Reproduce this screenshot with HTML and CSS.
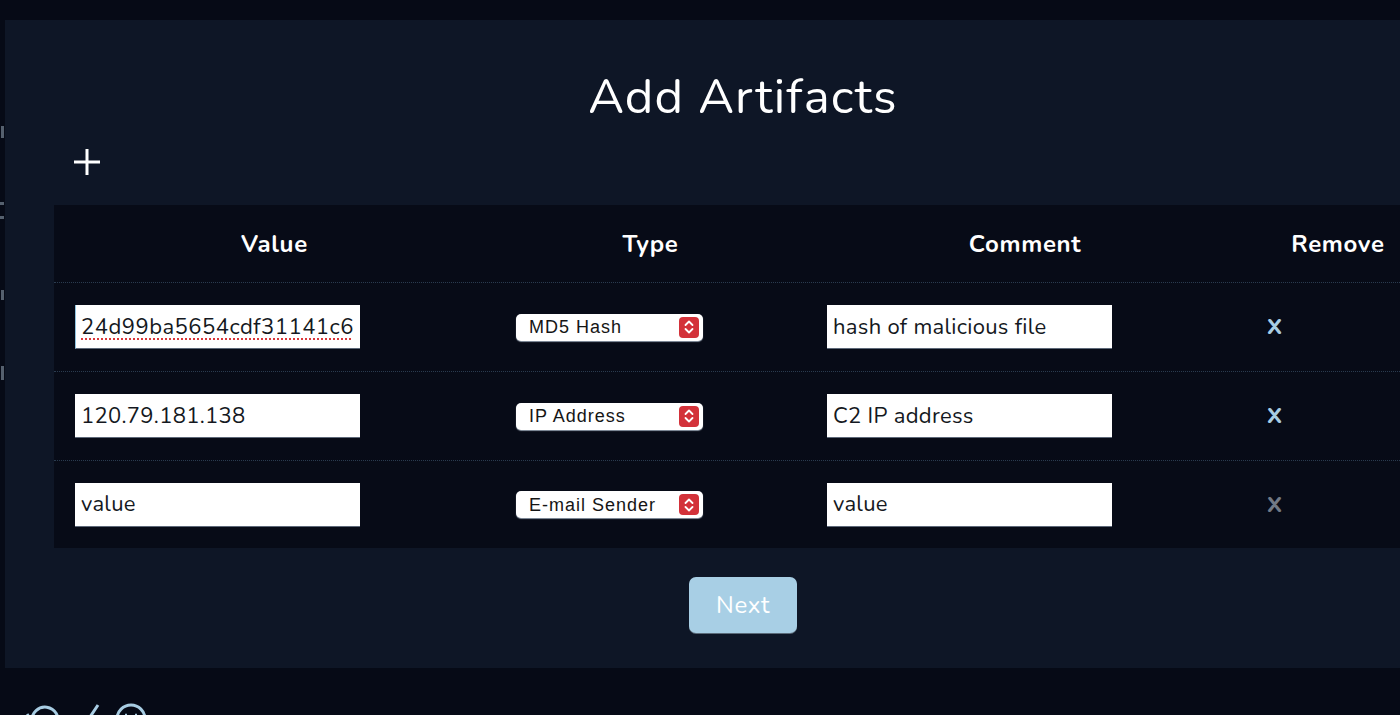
FILE: index.html
```html
<!DOCTYPE html>
<html lang="en">
<head>
<meta charset="utf-8">
<title>Add Artifacts</title>
<link rel="stylesheet" href="styles.css">
</head>
<body>
<div class="edge">
  <span class="mark m1"></span>
  <span class="mark m2"></span>
  <span class="mark m3"></span>
  <span class="mark m4"></span>
  <span class="mark m5"></span>
</div>
<main class="panel">
  <h1 class="title">Add Artifacts</h1>
  <div class="toolbar">
    <button class="add" aria-label="Add artifact">
      <svg width="28" height="28" viewBox="0 0 28 28"><path d="M14 1v26M1 14h26" stroke="#fff" stroke-width="3" fill="none"/></svg>
    </button>
  </div>
  <div class="table">
    <div class="row head">
      <div class="cell center">Value</div>
      <div class="cell center">Type</div>
      <div class="cell center">Comment</div>
      <div class="cell center">Remove</div>
    </div>
    <div class="row">
      <div class="cell"><input class="field spell" value="24d99ba5654cdf31141c6"></div>
      <div class="cell">
        <div class="select-wrap">
          <select class="select"><option>MD5 Hash</option></select>
          <span class="arrow"><svg width="12" height="16" viewBox="0 0 12 16"><path d="M2.5 6 6 2.5 9.5 6M2.5 10 6 13.5 9.5 10" stroke="#fff" stroke-width="1.8" fill="none" stroke-linecap="round" stroke-linejoin="round"/></svg></span>
        </div>
      </div>
      <div class="cell"><input class="field" value="hash of malicious file"></div>
      <div class="cell rm"><button class="remove">X</button></div>
    </div>
    <div class="row">
      <div class="cell"><input class="field" value="120.79.181.138"></div>
      <div class="cell">
        <div class="select-wrap">
          <select class="select"><option>IP Address</option></select>
          <span class="arrow"><svg width="12" height="16" viewBox="0 0 12 16"><path d="M2.5 6 6 2.5 9.5 6M2.5 10 6 13.5 9.5 10" stroke="#fff" stroke-width="1.8" fill="none" stroke-linecap="round" stroke-linejoin="round"/></svg></span>
        </div>
      </div>
      <div class="cell"><input class="field" value="C2 IP address"></div>
      <div class="cell rm"><button class="remove">X</button></div>
    </div>
    <div class="row last">
      <div class="cell"><input class="field" placeholder="value"></div>
      <div class="cell">
        <div class="select-wrap">
          <select class="select"><option>E-mail Sender</option></select>
          <span class="arrow"><svg width="12" height="16" viewBox="0 0 12 16"><path d="M2.5 6 6 2.5 9.5 6M2.5 10 6 13.5 9.5 10" stroke="#fff" stroke-width="1.8" fill="none" stroke-linecap="round" stroke-linejoin="round"/></svg></span>
        </div>
      </div>
      <div class="cell"><input class="field" placeholder="value"></div>
      <div class="cell rm"><button class="remove disabled" disabled>X</button></div>
    </div>
  </div>
  <div class="actions">
    <button class="next">Next</button>
  </div>
</main>
<footer class="footer">
  <svg class="ico" width="34" height="30" viewBox="0 0 34 30"><path d="M6 20a13 13 0 1 1 6 10" stroke="#a8cde3" stroke-width="3" fill="none"/><path d="M1 13l5 8 7-5" stroke="#a8cde3" stroke-width="3" fill="none"/></svg>
  <svg class="ico" width="26" height="30" viewBox="0 0 26 30"><path d="M2 22l6 6L24 4" stroke="#a8cde3" stroke-width="3" fill="none"/></svg>
  <svg class="ico" width="34" height="30" viewBox="0 0 34 30"><circle cx="17" cy="18" r="14" stroke="#a8cde3" stroke-width="3" fill="none"/><path d="M11 14h2M21 14h2" stroke="#a8cde3" stroke-width="2.5"/></svg>
</footer>
</body>
</html>
```

FILE: styles.css
```css
* { box-sizing: border-box; }

html, body {
  margin: 0;
  padding: 0;
}

body {
  background: #060a16;
  width: 1400px;
  height: 715px;
  overflow: hidden;
  font-family: "Nunito", Lato, "Noto Sans", sans-serif;
  color: #fff;
  position: relative;
}

.edge {
  position: absolute;
  left: 0;
  top: 0;
  width: 5px;
  height: 715px;
}

.mark {
  position: absolute;
  left: 1px;
  width: 3px;
  background: #55606e;
}
.m1 { top: 126px; height: 12px; }
.m2 { top: 202px; height: 3px; width: 4px; left: 0; }
.m3 { top: 216px; height: 3px; width: 4px; left: 0; }
.m4 { top: 290px; height: 10px; }
.m5 { top: 366px; height: 14px; }

.panel {
  margin: 20px 0 0 5px;
  width: 1474px;
  height: 648px;
  background: #0e1626;
  padding: 48px 47px 35px 49px;
  display: flex;
  flex-direction: column;
}

.title {
  margin: 0;
  text-align: center;
  font-weight: 400;
  font-size: 49px;
  line-height: 58px;
  letter-spacing: 1.2px;
  color: #fff;
}

.toolbar {
  display: flex;
  margin-top: 22px;
  padding-left: 19px;
}

.add {
  width: 28px;
  height: 28px;
  padding: 0;
  border: 0;
  background: none;
  display: flex;
}

.table {
  margin-top: 29px;
  width: 1378px;
  background: #070b17;
}

.row {
  display: grid;
  grid-template-columns: 441px 311px 438px 188px;
  height: 89px;
  align-items: center;
  border-bottom: 1px dotted #2a3b4f;
}

.row.head {
  height: 78px;
}

.row.last {
  height: 87px;
  border-bottom: 0;
}

.cell {
  padding-left: 21px;
  display: flex;
  align-items: center;
}

.cell.center {
  justify-content: center;
  padding-left: 0;
}

.cell.rm {
  padding-left: 23px;
}

.head .cell {
  font-weight: 700;
  font-size: 24px;
  letter-spacing: 0.7px;
  color: #fff;
}

.field {
  width: 285px;
  height: 44px;
  border: 0;
  border-bottom: 1px solid #5d6878;
  background: #fff;
  padding: 0 6px;
  font-family: "Nunito", Lato, "Noto Sans", sans-serif;
  font-size: 22px;
  color: #141821;
  letter-spacing: 0.3px;
  outline: none;
}

.field::placeholder {
  color: #141821;
  opacity: 1;
}

.spell {
  border-left: 1px solid #8fc3df;
  padding-left: 5px;
  letter-spacing: 0.5px;
  text-decoration: underline dotted #d9373a;
  text-underline-offset: 5px;
  text-decoration-thickness: 2px;
}

.select-wrap {
  position: relative;
  width: 187px;
  height: 27px;
}

.select {
  appearance: none;
  -webkit-appearance: none;
  width: 100%;
  height: 100%;
  border: 0;
  border-radius: 5px;
  background: #fff;
  padding: 0 28px 0 13px;
  font-family: "Liberation Sans", Arial, sans-serif;
  font-size: 18px;
  letter-spacing: 1px;
  color: #151515;
  box-shadow: 0 1px 1px #8a95a3;
}

.arrow {
  position: absolute;
  right: 4px;
  top: 3px;
  width: 20px;
  height: 21px;
  border-radius: 4px;
  background: #d3323a;
  display: flex;
  align-items: center;
  justify-content: center;
  pointer-events: none;
}

.remove {
  border: 0;
  background: none;
  padding: 0;
  font-family: "Nunito", Lato, "Noto Sans", sans-serif;
  font-weight: 800;
  font-size: 22px;
  line-height: 1;
  color: #a8cde3;
}

.remove.disabled {
  color: #727a85;
}

.actions {
  display: flex;
  justify-content: center;
  margin-top: 29px;
}

.next {
  width: 108px;
  height: 56px;
  border: 0;
  border-radius: 7px;
  background: #a8cfe5;
  box-shadow: 0 1px 0 #5b6b79;
  color: #fff;
  font-family: "Nunito", Lato, "Noto Sans", sans-serif;
  font-size: 24px;
  letter-spacing: 0.6px;
}

.footer {
  display: flex;
  gap: 14px;
  padding: 33px 0 0 26px;
}

.footer .ico {
  display: block;
}
```
